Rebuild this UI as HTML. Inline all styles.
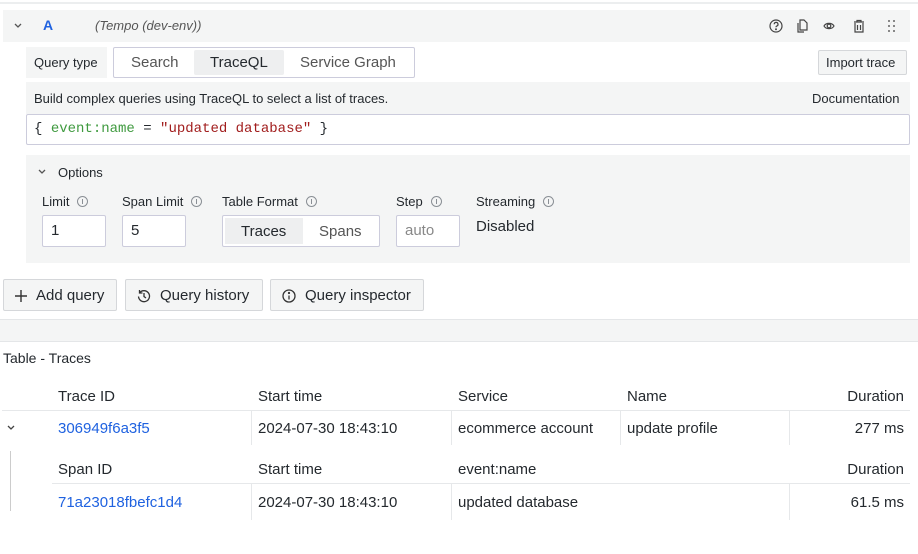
<!DOCTYPE html>
<html><head><meta charset="utf-8"><style>
*{box-sizing:border-box;margin:0;padding:0}
body{width:918px;height:554px;background:#fff;font-family:"Liberation Sans",sans-serif;color:#24292e;position:relative;overflow:hidden}
.a{position:absolute;white-space:nowrap}
.bg{background:#f4f5f5}
.bd{border:1px solid #ccccdc}
.t12{font-size:13px}.t13{font-size:13px}.t14{font-size:15px}
.btn{background:#f4f5f5;border:1px solid #d5d7da;border-radius:2px;font-size:15px;display:flex;align-items:center;gap:8px;padding:0 10px}
.lnk{color:#1f62e0}
.info{display:inline-block;width:11px;height:11px;border:1px solid #8a8f95;border-radius:50%;vertical-align:-1px;margin-left:8px;position:relative}
.info:after{content:"";position:absolute;left:4px;top:2px;width:1px;height:5px;background:#8a8f95}
.hl{background:#e6e8ea;height:1px}
.vl{background:#e6e8ea;width:1px}
svg{display:block}
</style></head><body>
<div class="a hl" style="left:0;top:2px;width:918px;height:2px;background:#eceeef"></div>
<div class="a bg" style="left:3px;top:10px;width:907px;height:32px"></div>
<svg class="a" style="left:13px;top:22px" width="10" height="8"><path d="M2 2l3 3 3-3" stroke="#555" stroke-width="1.3" fill="none"/></svg>
<div class="a t14" style="left:43px;top:17px;color:#1f62e0;font-weight:bold;font-size:14px">A</div>
<div class="a t12" style="left:95px;top:18px;font-style:italic;color:#555">(Tempo (dev-env))</div>
<svg class="a" style="left:768px;top:18px" width="134" height="16" fill="none" stroke="#444" stroke-width="1.2">
<circle cx="8" cy="8" r="6"/><path d="M6.2 6.3a1.9 1.9 0 1 1 2.5 1.8c-.5.2-.7.6-.7 1.2"/><circle cx="8" cy="11.3" r=".4" fill="#444"/>
<path d="M32 2h4l3 3v7h-7z M30 5v9h6"/>
<path d="M56 8c2-3.5 8-3.5 10 0c-2 3.5-8 3.5-10 0z"/><circle cx="61" cy="8" r="1.8"/>
<path d="M86 4h10M89 4V2.5h4V4M87 5v9h8V5M89.5 7v5M92.5 7v5"/>
<g fill="#666" stroke="none"><circle cx="121" cy="3" r="1"/><circle cx="126" cy="3" r="1"/><circle cx="121" cy="8" r="1"/><circle cx="126" cy="8" r="1"/><circle cx="121" cy="13" r="1"/><circle cx="126" cy="13" r="1"/></g>
</svg>
<div class="a bg t13" style="left:26px;top:47px;width:81px;height:31px;line-height:31px;padding-left:8px">Query type</div>
<div class="a bd" style="left:113px;top:47px;width:302px;height:31px;border-radius:2px"></div>
<div class="a" style="left:194px;top:50px;width:90px;height:25px;background:#eeeff0;border-radius:2px"></div>
<div class="a t14" style="left:131px;top:54px;color:#555">Search</div>
<div class="a t14" style="left:210px;top:54px">TraceQL</div>
<div class="a t14" style="left:300px;top:54px;color:#555">Service Graph</div>
<div class="a btn" style="left:818px;top:50px;width:89px;height:25px;font-size:13px;padding:0 7px">Import trace</div>
<div class="a bg" style="left:26px;top:82px;width:884px;height:32px"></div>
<div class="a t12" style="left:34px;top:91px">Build complex queries using TraceQL to select a list of traces.</div>
<div class="a t12" style="left:812px;top:91px">Documentation</div>
<div class="a bd" style="left:26px;top:114px;width:884px;height:31px;background:#fff;border-radius:2px"></div>
<div class="a" style="left:34px;top:121px;font-family:'Liberation Mono',monospace;font-size:14px">{ <span style="color:#3f9a3f">event:name</span> = <span style="color:#a11d1d">"updated database"</span> }</div>
<div class="a bg" style="left:26px;top:155px;width:884px;height:108px"></div>
<svg class="a" style="left:37px;top:168px" width="10" height="8"><path d="M2 2l3 3 3-3" stroke="#555" stroke-width="1.3" fill="none"/></svg>
<div class="a t12" style="left:58px;top:165px">Options</div>
<div class="a t12" style="left:42px;top:194px">Limit<span class="info"></span></div>
<div class="a t12" style="left:122px;top:194px">Span Limit<span class="info"></span></div>
<div class="a t12" style="left:222px;top:194px">Table Format<span class="info"></span></div>
<div class="a t12" style="left:396px;top:194px">Step<span class="info"></span></div>
<div class="a t12" style="left:476px;top:194px">Streaming<span class="info"></span></div>
<div class="a bd t14" style="left:42px;top:215px;width:64px;height:32px;background:#fff;line-height:30px;padding-left:8px;border-radius:2px">1</div>
<div class="a bd t14" style="left:122px;top:215px;width:64px;height:32px;background:#fff;line-height:30px;padding-left:8px;border-radius:2px">5</div>
<div class="a bd" style="left:222px;top:215px;width:158px;height:32px;background:#fff;border-radius:2px"></div>
<div class="a" style="left:225px;top:218px;width:78px;height:26px;background:#eeeff0"></div>
<div class="a t14" style="left:241px;top:223px">Traces</div>
<div class="a t14" style="left:319px;top:223px;color:#555">Spans</div>
<div class="a bd t14" style="left:396px;top:215px;width:64px;height:32px;background:#fff;line-height:30px;padding-left:8px;color:#888;border-radius:2px">auto</div>
<div class="a t14" style="left:476px;top:218px">Disabled</div>
<div class="a btn" style="left:3px;top:279px;width:114px;height:32px;padding-top:1px"><svg width="14" height="14"><path d="M7 1v12M1 7h12" stroke="#333" stroke-width="1.4"/></svg>Add query</div>
<div class="a btn" style="left:125px;top:279px;width:138px;height:32px;padding-top:1px"><svg width="16" height="16" fill="none" stroke="#333" stroke-width="1.3"><path d="M3.5 5A5.5 5.5 0 1 1 2.5 8.5M3.5 2v3h3M8 5v3.5l2 1.5"/></svg>Query history</div>
<div class="a btn" style="left:270px;top:279px;width:154px;height:32px;padding-top:1px"><svg width="16" height="16" fill="none" stroke="#333" stroke-width="1.3"><circle cx="8" cy="8" r="6"/><path d="M8 7.5v4"/><circle cx="8" cy="5" r=".5" fill="#333"/></svg>Query inspector</div>
<div class="a bg" style="left:0;top:319px;width:918px;height:23px;border-top:1px solid #e4e6e8;border-bottom:1px solid #e4e6e8"></div>
<div class="a t14" style="left:3px;top:350px;font-size:14px">Table - Traces</div>
<div class="a t14" style="left:58px;top:388px">Trace ID</div>
<div class="a t14" style="left:258px;top:388px">Start time</div>
<div class="a t14" style="left:458px;top:388px">Service</div>
<div class="a t14" style="left:627px;top:388px">Name</div>
<div class="a t14" style="right:14px;top:388px">Duration</div>
<div class="a hl" style="left:2px;top:410px;width:908px"></div>
<svg class="a" style="left:6px;top:424px" width="10" height="8"><path d="M2 2l3 3 3-3" stroke="#444" stroke-width="1.3" fill="none"/></svg>
<div class="a t14 lnk" style="left:58px;top:420px">306949f6a3f5</div>
<div class="a t14" style="left:258px;top:420px">2024-07-30 18:43:10</div>
<div class="a t14" style="left:458px;top:420px">ecommerce account</div>
<div class="a t14" style="left:627px;top:420px">update profile</div>
<div class="a t14" style="right:14px;top:420px">277 ms</div>
<div class="a vl" style="left:251px;top:411px;height:34px"></div>
<div class="a vl" style="left:451px;top:411px;height:34px"></div>
<div class="a vl" style="left:620px;top:411px;height:34px"></div>
<div class="a vl" style="left:789px;top:411px;height:34px"></div>
<div class="a vl" style="left:10px;top:451px;height:60px;background:#ccc"></div>
<div class="a t14" style="left:58px;top:461px">Span ID</div>
<div class="a t14" style="left:258px;top:461px">Start time</div>
<div class="a t14" style="left:458px;top:461px">event:name</div>
<div class="a t14" style="right:14px;top:461px">Duration</div>
<div class="a hl" style="left:52px;top:483px;width:858px"></div>
<div class="a t14 lnk" style="left:58px;top:494px">71a23018fbefc1d4</div>
<div class="a t14" style="left:258px;top:494px">2024-07-30 18:43:10</div>
<div class="a t14" style="left:458px;top:494px">updated database</div>
<div class="a t14" style="right:14px;top:494px">61.5 ms</div>
<div class="a vl" style="left:251px;top:484px;height:36px"></div>
<div class="a vl" style="left:451px;top:484px;height:36px"></div>
<div class="a vl" style="left:789px;top:484px;height:36px"></div>
</body></html>
